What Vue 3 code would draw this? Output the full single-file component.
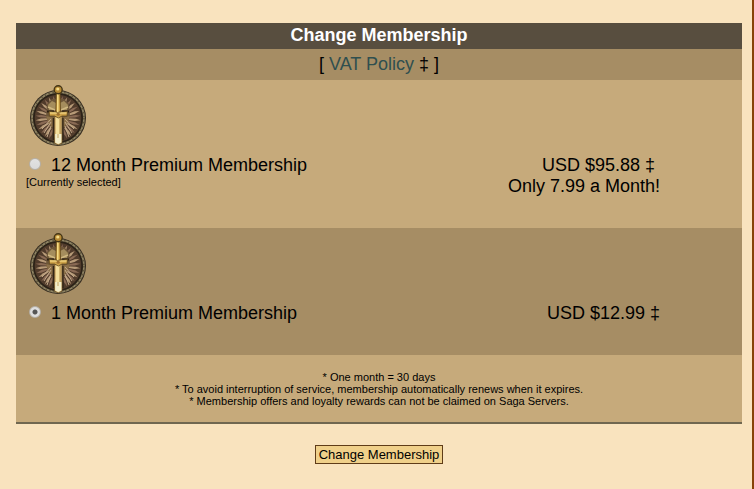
<script setup>
import { ref } from 'vue'

const selected = ref('month')

const plans = [
  { id: 'year', name: '12 Month Premium Membership', price: 'USD $95.88 ‡\u00a0', extra: 'Only 7.99 a Month!', current: true },
  { id: 'month', name: '1 Month Premium Membership', price: 'USD $12.99 ‡' }
]

const notes = [
  '* One month = 30 days',
  '* To avoid interruption of service, membership automatically renews when it expires.',
  '* Membership offers and loyalty rewards can not be claimed on Saga Servers.'
]

// mane of the lion head, fanned round the centre of the medal
const rays = Array.from({ length: 30 }, (_, i) => i * 12)
</script>

<template>
  <main class="page">
    <form class="membership" @submit.prevent>
      <div class="panel">
        <h1 class="panel-title">Change Membership</h1>
        <p class="policy">[ <a href="#vat">VAT Policy</a> ‡ ]</p>

        <div v-for="plan in plans" :key="plan.id" class="plan" :class="'plan-' + plan.id">
          <svg class="emblem" viewBox="0 0 60 64" aria-hidden="true">
            <circle cx="30" cy="34" r="28" fill="#352c20" />
            <circle cx="30" cy="34" r="26" fill="none" stroke="#8f8464" stroke-width="1.8" />
            <circle cx="30" cy="34" r="26" fill="none" stroke="#62573d" stroke-width="1.8" stroke-dasharray="1.5 2.5" />
            <circle cx="30" cy="34" r="24" fill="#503b2b" stroke="#2b2217" stroke-width="1.4" />
            <g>
              <path
                v-for="deg in rays"
                :key="deg"
                d="M29.6 29 L28.8 16 L30 11.5 L31.2 17 L30.5 29Z"
                :transform="`rotate(${deg} 30 34)`"
                :fill="deg % 24 ? '#8a6a54' : '#b89b78'"
              />
            </g>
            <path d="M19 20 L24 15 H36 L41 20 L42 33 L37 44 H23 L18 33Z" fill="#6d5639" />
            <path d="M20 21 L24 17 L28 19 V26 L21 26Z M40 21 L36 17 L32 19 V26 L39 26Z" fill="#a58d5d" />
            <path d="M20 23 L27 26 M40 23 L33 26" stroke="#d0b881" stroke-width="1.4" />
            <path d="M19 27.5 H26 M34 27.5 H41" stroke="#2c2015" stroke-width="2" />
            <path d="M18 32 L26 34 V44 L21 40Z M42 32 L34 34 V44 L39 40Z" fill="#8c7048" />
            <path d="M25.5 34 V56 M34.8 34 V56" stroke="#2c2016" stroke-width="1.6" />
            <path d="M23 35 L14 45 M23 38 L16 49 M23 42 L19 53 M37 35 L46 45 M37 38 L44 49 M37 42 L41 53" stroke="#c3a98a" stroke-width="1" />
            <path d="M26.4 59 V32 H34 V59 L30.2 61Z" fill="#d5b575" stroke="#6b5228" stroke-width="0.8" />
            <path d="M28 33 H32 V58 H28Z" fill="#f4df9c" />
            <path d="M32 33 V50" stroke="#b18c49" stroke-width="1" />
            <path d="M27.2 50 H33.4 V58.5 L30.2 60 L27.2 58.5Z" fill="#f2ecc9" />
            <path d="M30 50 V54" stroke="#c5a461" stroke-width="1" />
            <path d="M21 27.5 L25 28 H35.5 L39.5 27.5 L39 32 L34 32 L30.3 34 L26.5 32 H21.5Z" fill="#cda249" stroke="#60471d" stroke-width="0.8" />
            <path d="M22 29 H38.5" stroke="#f5da88" stroke-width="1.2" />
            <path d="M28.4 8 H32 L32.6 28 H27.8Z" fill="#c89b3f" stroke="#5e451a" stroke-width="0.8" />
            <path d="M29.8 8 V28" stroke="#f8df88" stroke-width="1.5" />
            <circle cx="30.2" cy="5.8" r="4" fill="#b78a34" stroke="#443516" stroke-width="1.4" />
            <circle cx="29.8" cy="5" r="1.6" fill="#f4dc89" />
            <circle cx="30.2" cy="30.2" r="1.6" fill="#9d7030" />
          </svg>

          <div class="plan-line">
            <div class="plan-choice">
              <label class="plan-label">
                <input v-model="selected" type="radio" name="plan" :value="plan.id" class="plan-radio" />
                <span>{{ plan.name }}</span>
              </label>
              <div v-if="plan.current" class="plan-current">[Currently selected]</div>
            </div>
            <div class="plan-price">
              <div>{{ plan.price }}</div>
              <div v-if="plan.extra">{{ plan.extra }}</div>
            </div>
          </div>
        </div>

        <div class="notes">
          <p v-for="note in notes" :key="note">{{ note }}</p>
        </div>
      </div>

      <button type="submit" class="submit">Change Membership</button>
    </form>
  </main>
</template>

<style>
body {
  background: #f9e3be;
}
</style>

<style scoped>
.page {
  box-sizing: border-box;
  min-height: 100vh;
  padding: 23px 10px 24px 16px;
  border-right: 2px solid #874307;
  background: #f9e3be;
  color: #000;
  font-family: "Liberation Sans", Arial, sans-serif;
  font-size: 18px;
  line-height: 21px;
}

.membership {
  display: flex;
  flex-direction: column;
  align-items: center;
  gap: 21px;
}

.panel {
  width: 100%;
  border-bottom: 2px solid #706750;
}

.panel-title {
  margin: 0;
  padding: 2px 0 3px;
  background: #584e3f;
  color: #fff;
  font-size: 18px;
  font-weight: bold;
  text-align: center;
}

.policy {
  margin: 0;
  padding: 5px 0;
  background: #a68d64;
  text-align: center;
}

.policy a {
  color: #2f4f4f;
  text-decoration: none;
}

.plan {
  padding: 4px 82px 31px 10px;
  background: #c6aa7b;
}

.plan-month {
  background: #a68d64;
}

.emblem {
  display: block;
  width: 60px;
  height: 64px;
  margin-left: 2px;
}

.plan-line {
  display: flex;
  justify-content: space-between;
  padding-top: 7px;
}

.plan-label {
  display: flex;
  align-items: flex-start;
  gap: 10px;
}

.plan-radio {
  appearance: none;
  box-sizing: border-box;
  width: 12px;
  height: 12px;
  margin: 3px 0 0 3px;
  border: 1px solid #b5b0a8;
  border-radius: 50%;
  background: linear-gradient(#e2e2e2, #dadada);
}

.plan-radio:checked {
  background: radial-gradient(circle, #555 0 2px, #dedede 3px);
}

.plan-current {
  font-size: 11px;
  line-height: 12px;
}

.plan-price {
  text-align: right;
}

.notes {
  padding: 16px 0 15px;
  background: #c6aa7b;
  font-size: 11px;
  line-height: 12px;
  text-align: center;
}

.notes p {
  margin: 0;
}

.submit {
  padding: 1px 3px;
  border: 1px solid #5f3c18;
  background: #f0d08a;
  color: #000;
  font-family: inherit;
  font-size: 13px;
  line-height: 15px;
}
</style>
